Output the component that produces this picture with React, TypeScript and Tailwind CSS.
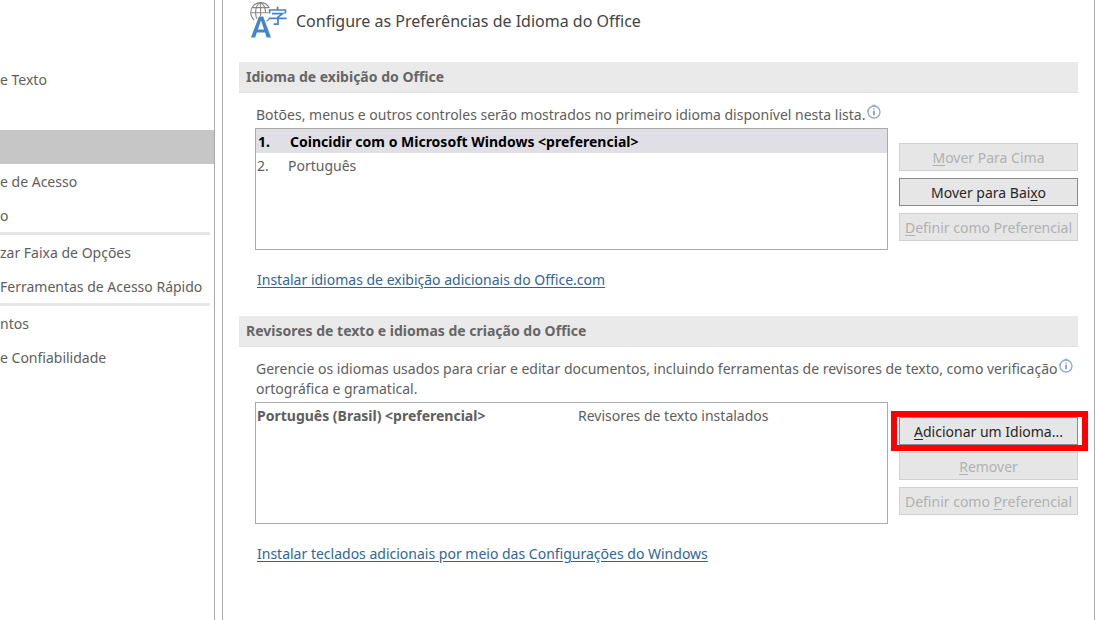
import React from "react";

const InfoIcon = () => (
  <svg className="ml-0.5 -mt-px shrink-0" width="14" height="15" viewBox="0 0 14 15" fill="none" aria-hidden="true">
    <circle cx="7" cy="8" r="6" stroke="#8ea9d6" strokeWidth="1.3" />
    <path d="M1 5.5V8M5.5 1.5h3" stroke="#8ea9d6" strokeWidth="1.6" />
    <path d="M7 6.8V11.2M7 4.4V5.6" stroke="#4d5a70" strokeWidth="1.1" />
  </svg>
);

const LanguageIcon = () => (
  <svg className="shrink-0" width="38" height="38" viewBox="0 0 38 38" fill="none" aria-hidden="true">
    <g stroke="#868686" strokeWidth="1.1">
      <path d="M4.2 20A9.9 9.9 0 0 1 .8 12.4 9.8 9.8 0 0 1 10.6 2.6c3.9 0 7 2 8.6 5.2M16.6 21.2l2.6-2" />
      <path d="M10.6 2.6V16M10.6 2.6C7 4.5 5.6 8 5.6 12.5c0 2.4.4 4.4 1.2 6.2M10.6 2.6c3.4 1.9 4.8 5.4 5 10.2" />
      <path d="M2.4 7.6h16.8M.8 12.8h17.4" />
    </g>
    <path
      fillRule="evenodd"
      clipRule="evenodd"
      d="M8.9 16.5h4.3L21 37.4h-4.3l-1.7-4.8H6.8l-1.6 4.8H1L8.9 16.5ZM11 20.4 7.9 29.4h6.1l-3-9Z"
      fill="#4285c8"
    />
    <path d="M27.6 6.8V10M19.6 13.6V10H35.4v3.6M22 13.6h10.6L28 17.2v7h-4.4M18.6 18.4h18" stroke="#4285c8" strokeWidth="1.7" />
  </svg>
);

const sidebarGroups = [
  ["e Texto", "", "", "e de Acesso", "o"],
  ["zar Faixa de Opções", "Ferramentas de Acesso Rápido"],
  ["ntos", "e Confiabilidade"],
];

const Sidebar = () => (
  <nav className="w-[215px] shrink-0 overflow-hidden whitespace-nowrap border-r border-[#ababab] pt-[62px]">
    {sidebarGroups.map((group, g) => (
      <div key={g}>
        {g > 0 && <hr className="mr-1 h-[3px] border-0 bg-[#e6e6e6]" />}
        {group.map((item, i) => (
          <button key={i} type="button" className={`flex h-[34px] w-full items-center pt-0.5 text-left ${g === 0 && i === 2 ? "bg-[#c6c6c6]" : ""}`}>
            {item}
          </button>
        ))}
      </div>
    ))}
  </nav>
);

const SectionTitle = ({ children }: { children: React.ReactNode }) => (
  <h2 className="flex h-[31px] items-center border-b border-[#e1e1e1] bg-[#eaeaea] px-[7px] font-bold text-[#666]">{children}</h2>
);

type ActionProps = { before?: string; hotkey: string; after: string; disabled?: boolean };

const ActionButton = ({ before, hotkey, after, disabled }: ActionProps) => (
  <button
    type="button"
    disabled={disabled}
    className={`h-7 w-full whitespace-nowrap border bg-[#e6e6e6] pt-px text-center leading-6 ${disabled ? "border-[#d0d0d0] text-[#b1b1b1]" : "border-[#8a8a8a] text-[#262626]"}`}
  >
    {before}
    <span className="underline underline-offset-2">{hotkey}</span>
    {after}
  </button>
);

const App = () => {
  return (
    <div className="flex min-h-screen bg-white font-['Noto_Sans','Open_Sans',sans-serif] text-sm leading-5 text-[#5e5e5e]">
      <Sidebar />

      <main className="ml-[7px] mr-[5px] min-w-0 flex-1 border-x border-[#ababab] px-4">
        <header className="flex h-[62px] items-start gap-2 pl-[11px]">
          <LanguageIcon />
          <h1 className="pt-[9px] text-base leading-6 text-[#444]">Configure as Preferências de Idioma do Office</h1>
        </header>

        <section>
          <SectionTitle>Idioma de exibição do Office</SectionTitle>
          <div className="pl-4 pt-3">
            <p className="flex h-[23px] whitespace-nowrap pl-px">
              Botões, menus e outros controles serão mostrados no primeiro idioma disponível nesta lista.
              <InfoIcon />
            </p>
            <div className="flex items-start gap-[11px]">
              <ol className="h-[122px] flex-1 border border-[#ababab]">
                <li className="flex h-6 items-center bg-[#dfdfe5] pl-0.5 pt-0.5 font-bold text-black">
                  <span className="w-8">1.</span>Coincidir com o Microsoft Windows &lt;preferencial&gt;
                </li>
                <li className="flex h-6 items-center pl-px pt-0.5">
                  <span className="w-[31px]">2.</span>Português
                </li>
              </ol>
              <div className="flex w-[179px] shrink-0 flex-col gap-[7px] pt-[15px]">
                <ActionButton hotkey="M" after="over Para Cima" disabled />
                <ActionButton before="Mover para Bai" hotkey="x" after="o" />
                <ActionButton hotkey="D" after="efinir como Preferencial" disabled />
              </div>
            </div>
            <a href="#display" className="mt-5 mb-[26px] ml-0.5 inline-block text-[#2f6699] underline underline-offset-2">
              Instalar idiomas de exibição adicionais do Office.com
            </a>
          </div>
        </section>

        <section>
          <SectionTitle>Revisores de texto e idiomas de criação do Office</SectionTitle>
          <div className="pl-4 pt-3">
            <p className="h-[43px] pl-px">
              <span className="flex h-5 whitespace-nowrap">
                Gerencie os idiomas usados para criar e editar documentos, incluindo ferramentas de revisores de texto, como verificação
                <InfoIcon />
              </span>
              ortográfica e gramatical.
            </p>
            <div className="flex items-start gap-[11px]">
              <div className="h-[122px] flex-1 border border-[#ababab]">
                <div className="grid h-6 grid-cols-[321px_1fr] items-center pl-px pt-0.5">
                  <strong>Português (Brasil) &lt;preferencial&gt;</strong>
                  <span>Revisores de texto instalados</span>
                </div>
              </div>
              <div className="flex w-[179px] shrink-0 flex-col gap-[7px] pt-[15px]">
                <div className="relative h-7">
                  <ActionButton hotkey="A" after="dicionar um Idioma..." />
                  <div className="pointer-events-none absolute -inset-y-1.5 -left-2 -right-2.5 border-6 border-[#fe0000]" />
                </div>
                <ActionButton hotkey="R" after="emover" disabled />
                <ActionButton before="Definir como " hotkey="P" after="referencial" disabled />
              </div>
            </div>
            <a href="#keyboards" className="mt-5 ml-0.5 inline-block text-[#2f6699] underline underline-offset-2">
              Instalar teclados adicionais por meio das Configurações do Windows
            </a>
          </div>
        </section>
      </main>
    </div>
  );
};

export default App;
